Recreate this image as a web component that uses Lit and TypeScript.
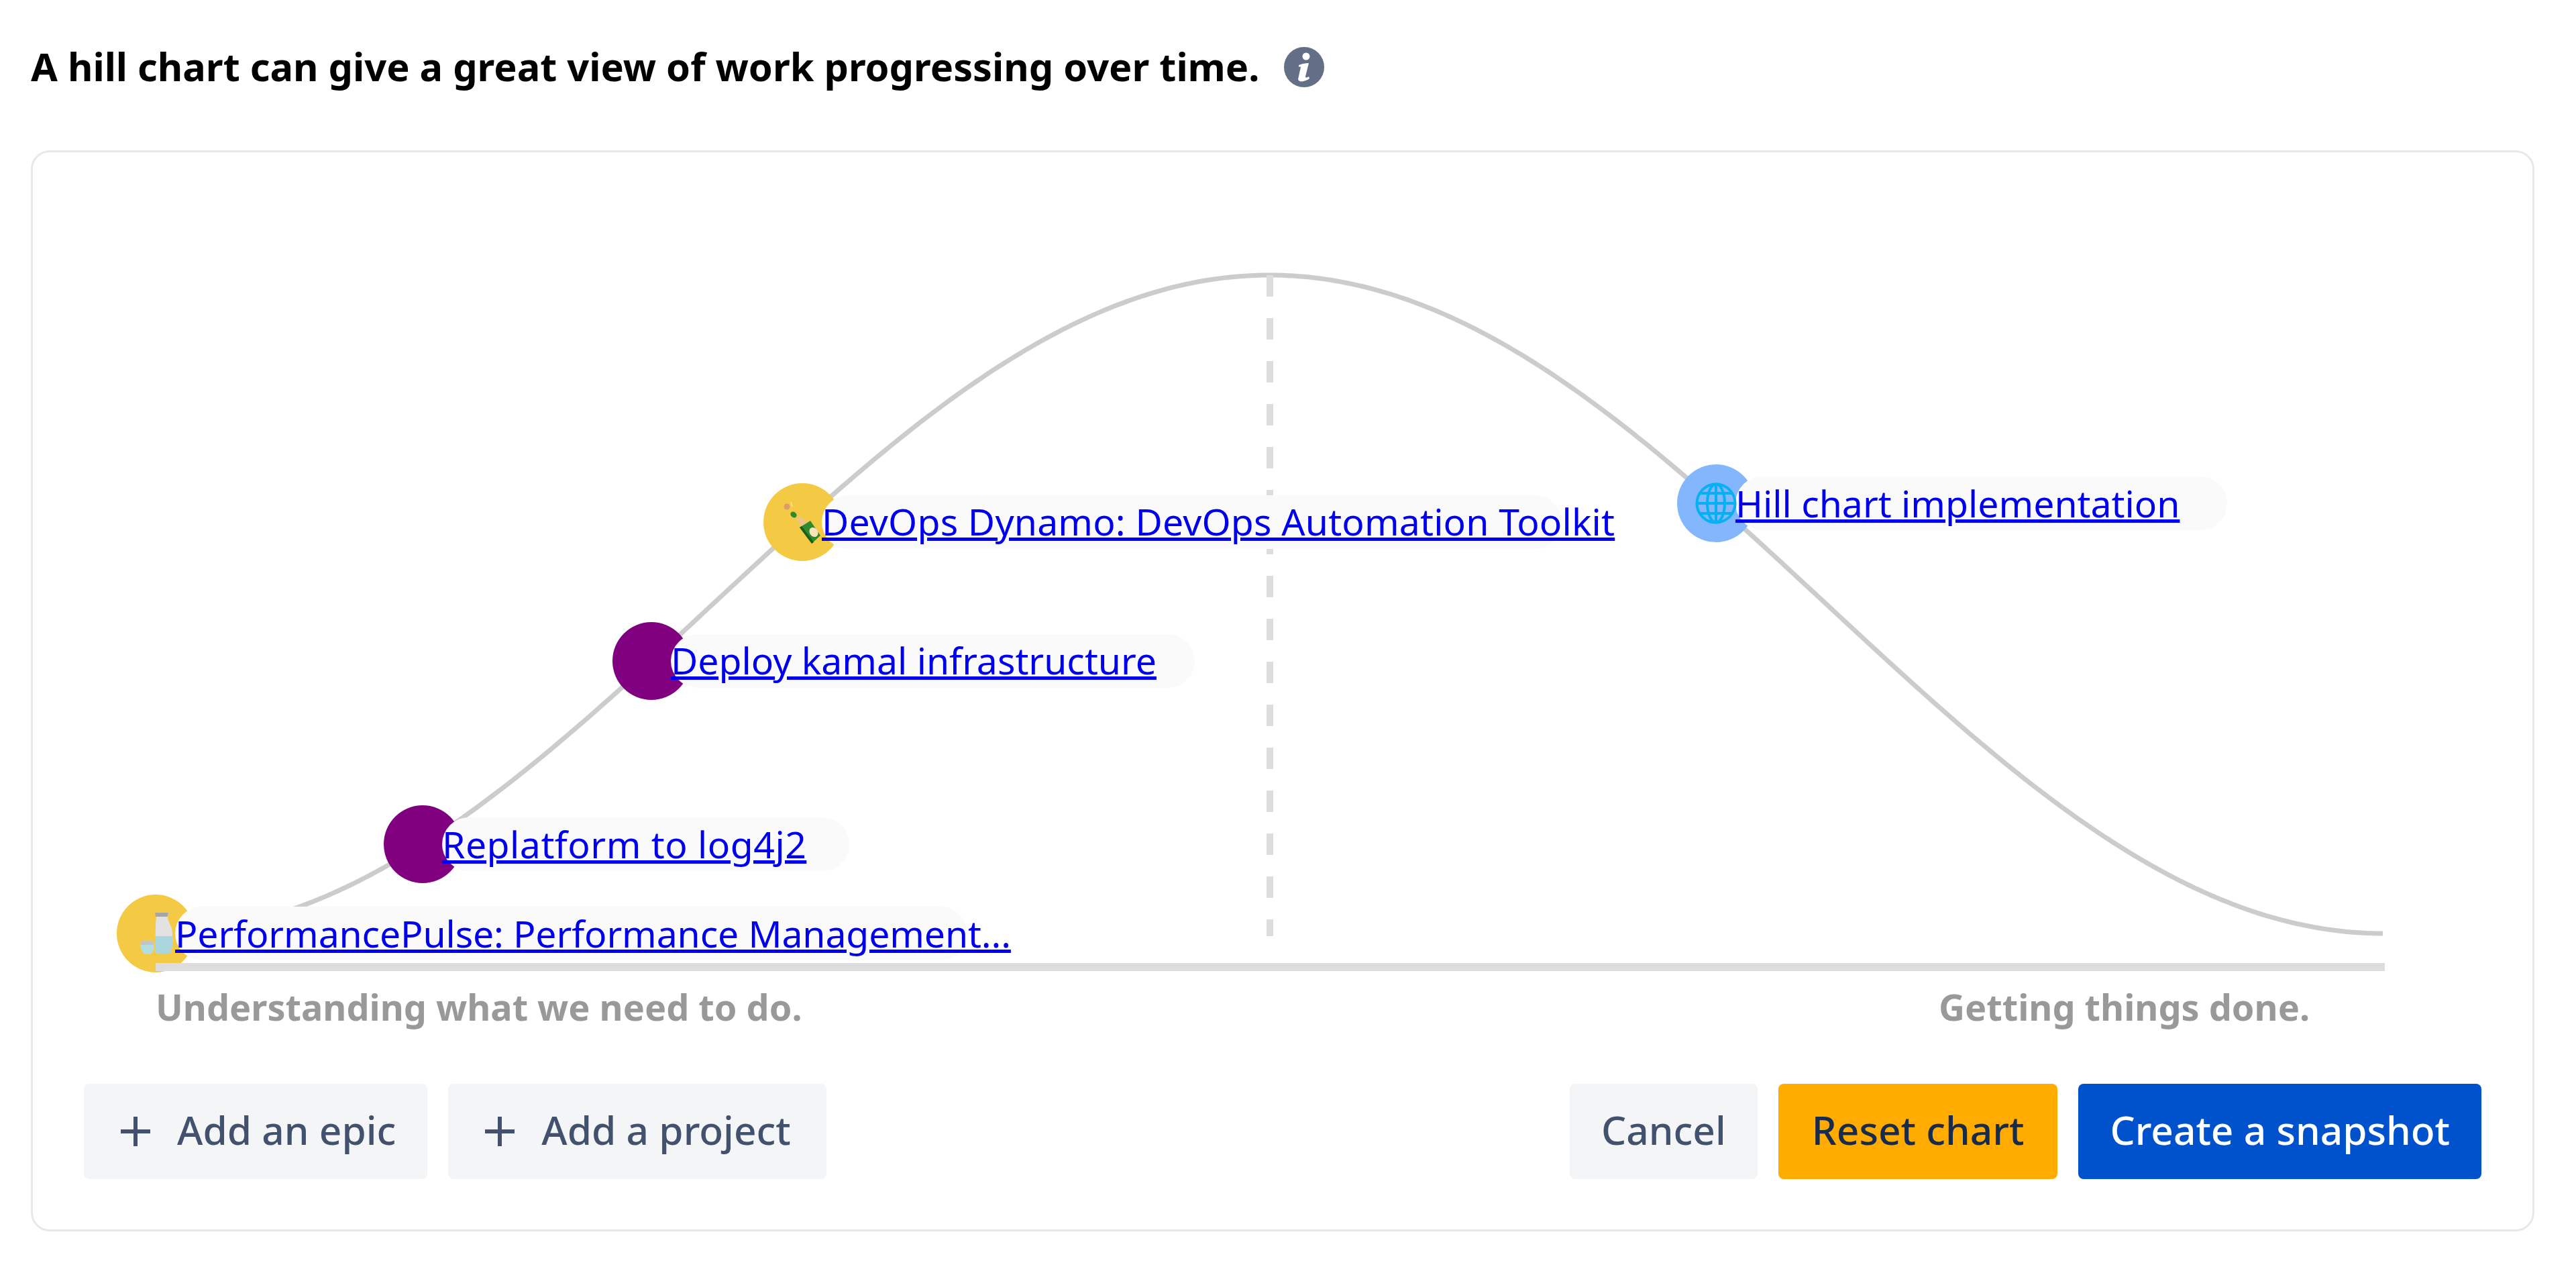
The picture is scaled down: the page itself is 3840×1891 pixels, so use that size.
import { LitElement, html, css, svg } from 'lit';
import { customElement } from 'lit/decorators.js';

const X0 = 232;
const X1 = 3553;
const BASE = 1391;
const PEAK = 410;

// hill shape: one period of a cosine between the two ends of the axis
const hillY = (x: number) => {
  const t = (x - X0) / (X1 - X0);
  return BASE - (BASE - PEAK) * (1 - Math.cos(2 * Math.PI * t)) / 2;
};

const hillPath = () => {
  const pts: string[] = [];
  for (let x = X0; x <= X1; x += 8) pts.push(`${x},${hillY(x).toFixed(1)}`);
  return 'M' + pts.join(' L');
};

const sakeIcon = svg`
  <svg class="emoji" viewBox="0 0 66 66">
    <path d="M32 2h20l-1 7c0 5 4 9 6 17 2 9 2 25-1 33-1 3-3 4-6 4H38c-4 0-6-3-6-7 0-12 1-24 1-36 0-5 1-8 1-11z" fill="#e2e2e2"/>
    <path d="M32 37h26c1 8 0 16-2 22-1 3-3 4-6 4H38c-4 0-6-3-6-7z" fill="#a9d6dc"/>
    <path d="M32 2h20l-1 6H33z" fill="#a6a6a6"/>
    <path d="M10 46c4-3 17-3 21 0 0 9-2 16-6 18h-8c-4-2-7-9-7-18z" fill="#b4dde2"/>
    <path d="M10 46c4-3 17-3 21 0l-1 4H11z" fill="#c4c4c4"/>
  </svg>`;

const champagneIcon = svg`
  <svg class="emoji" viewBox="0 0 66 66">
    <circle cx="10" cy="10" r="4.500" fill="#dd9a6a"/>
    <path d="M16 3l2 7" stroke="#f8e89a" stroke-width="1.500"/>
    <ellipse cx="20" cy="22" rx="5" ry="4" transform="rotate(40 20 22)" fill="#2f8a2c"/>
    <path d="M24 28l5-4 13 11-9 7z" fill="#edc487"/>
    <path d="M29 41l16-10 15 22-13 12z" fill="#2f8a2c"/>
    <path d="M29 41l3-2 18 24-3 2z" fill="#1c5c1c"/>
    <ellipse cx="50" cy="48" rx="6" ry="7.500" transform="rotate(-35 50 48)" fill="#fbe3c0"/>
  </svg>`;

const globeIcon = svg`
  <svg class="emoji" viewBox="0 0 66 66" fill="none" stroke="#06b1f2" stroke-width="4">
    <circle cx="33" cy="33" r="28.500"/>
    <ellipse cx="33" cy="33" rx="13" ry="28.500"/>
    <path d="M33 4.500v57M4.500 33h57M9 18h48M9 48h48"/>
  </svg>`;

interface Item {
  label: string;
  cx: number;
  color: string;
  pillWidth: number;
  tracking: number;
  icon?: unknown;
}

const ITEMS: Item[] = [
  { label: 'PerformancePulse: Performance Management...', cx: 232, color: '#f4ca45', pillWidth: 1181, tracking: -0.12, icon: sakeIcon },
  { label: 'Replatform to log4j2', cx: 630, color: '#800080', pillWidth: 607, tracking: 0.5 },
  { label: 'Deploy kamal infrastructure', cx: 971, color: '#800080', pillWidth: 781, tracking: 0 },
  { label: 'DevOps Dynamo: DevOps Automation Toolkit', cx: 1196, color: '#f4ca45', pillWidth: 1103, tracking: 0.18, icon: champagneIcon },
  { label: 'Hill chart implementation', cx: 2558, color: '#84b6fd', pillWidth: 733, tracking: 0, icon: globeIcon },
];

@customElement('app-root')
export class AppRoot extends LitElement {
  static styles = css`
    :host {
      display: block;
      width: 3840px;
      height: 1891px;
      box-sizing: border-box;
      padding: 64px 62px 0 46px;
      background: #fff;
      font-family: "Noto Sans", sans-serif;
    }
    .title {
      display: flex;
      align-items: center;
      gap: 36px;
      height: 72px;
      font-size: 57.700px;
      font-weight: 700;
      color: #000;
    }
    .title span {
      margin-top: -4px;
    }
    .info {
      width: 60px;
      height: 60px;
      flex: none;
    }
    .card {
      position: relative;
      box-sizing: border-box;
      height: 1611px;
      margin-top: 88px;
      padding: 1388px 76px 0 76px;
      border: 3px solid #e6e8ec;
      border-radius: 28px;
    }
    .canvas {
      position: absolute;
      left: -49px;
      top: -227px;
      width: 3840px;
      height: 1500px;
      pointer-events: none;
    }
    .marker {
      position: absolute;
      width: 116px;
      height: 116px;
      border-radius: 50%;
      transform: translate(-50%, -50%);
    }
    .pill {
      position: absolute;
      height: 80px;
      box-sizing: border-box;
      padding-bottom: 2px;
      transform: translateY(-50%);
      border-radius: 40px;
      background: #fafafa;
      display: flex;
      align-items: center;
      white-space: nowrap;
    }
    .pill a {
      color: #00e;
      font-size: 55.300px;
      text-decoration: underline;
      text-decoration-thickness: 5px;
    }
    .emoji-wrap {
      position: absolute;
    }
    .emoji {
      position: absolute;
      width: 66px;
      height: 66px;
      transform: translate(-50%, -50%);
    }
    .axis-label {
      position: absolute;
      top: 1463px;
      font-size: 54px;
      font-weight: 700;
      color: #999;
    }
    .actions {
      display: flex;
      justify-content: space-between;
    }
    .group {
      display: flex;
      gap: 31px;
    }
    .btn {
      display: flex;
      align-items: center;
      justify-content: center;
      gap: 38px;
      height: 142px;
      box-sizing: border-box;
      padding: 0 47px 7px;
      border: 0;
      border-radius: 8px;
      background: #f4f5f7;
      color: #42526e;
      font: 500 58.600px "Noto Sans", sans-serif;
    }
    .btn.add { padding-left: 53px; }
    .btn.wide { padding-right: 53px; }
    .btn.warn { background: #ffab00; color: #172b4d; padding: 0 50px 7px; }
    .btn.primary { background: #0052cc; color: #fff; }
    .plus { width: 48px; height: 48px; margin-top: 7px; }
  `;

  private renderMarker(item: Item) {
    const cy = hillY(item.cx);
    return html`
      <div class="marker" style="left:${item.cx}px;top:${cy}px;background:${item.color}"></div>
      <div class="pill" style="left:${item.cx + 29}px;top:${cy}px;width:${item.pillWidth}px">
        <a href="#" style="letter-spacing:${item.tracking}px">${item.label}</a>
      </div>
      ${item.icon
        ? html`<div class="emoji-wrap" style="left:${item.cx}px;top:${cy}px">${item.icon}</div>`
        : ''}
    `;
  }

  private renderPlus() {
    return html`<svg class="plus" viewBox="0 0 48 48"><path d="M24 2v44M2 24h44" stroke="currentColor" stroke-width="6"/></svg>`;
  }

  render() {
    return html`
      <div class="title">
        <span>A hill chart can give a great view of work progressing over time.</span>
        <svg class="info" viewBox="0 0 60 60">
          <circle cx="30" cy="30" r="30" fill="#626f86"/>
          <circle cx="33" cy="14" r="5.500" fill="#fff"/>
          <path d="M22 27c5-2 10-3 15-3l-5 20c0 2 2 2 5 0l1 3c-5 4-16 7-17 1l4-18c-1-1-2-1-3 0z" fill="#fff"/>
        </svg>
      </div>
      <div class="card">
        <div class="canvas">
          <svg width="3840" height="1500" style="position:absolute;left:0;top:0">
            <path d="${hillPath()}" fill="none" stroke="#ccc" stroke-width="7"/>
            <path d="M1893 410V1395" stroke="#ddd" stroke-width="10" stroke-dasharray="32 32"/>
          </svg>
          ${ITEMS.map((item) => this.renderMarker(item))}
          <svg width="3840" height="1500" style="position:absolute;left:0;top:0">
            <path d="M232 1441H3555" stroke="#ddd" stroke-width="12"/>
          </svg>
          <div class="axis-label" style="left:232px">Understanding what we need to do.</div>
          <div class="axis-label" style="left:2890px">Getting things done.</div>
        </div>
        <div class="actions">
          <div class="group">
            <button class="btn add">${this.renderPlus()}Add an epic</button>
            <button class="btn add wide">${this.renderPlus()}Add a project</button>
          </div>
          <div class="group">
            <button class="btn">Cancel</button>
            <button class="btn warn">Reset chart</button>
            <button class="btn primary">Create a snapshot</button>
          </div>
        </div>
      </div>
    `;
  }
}
